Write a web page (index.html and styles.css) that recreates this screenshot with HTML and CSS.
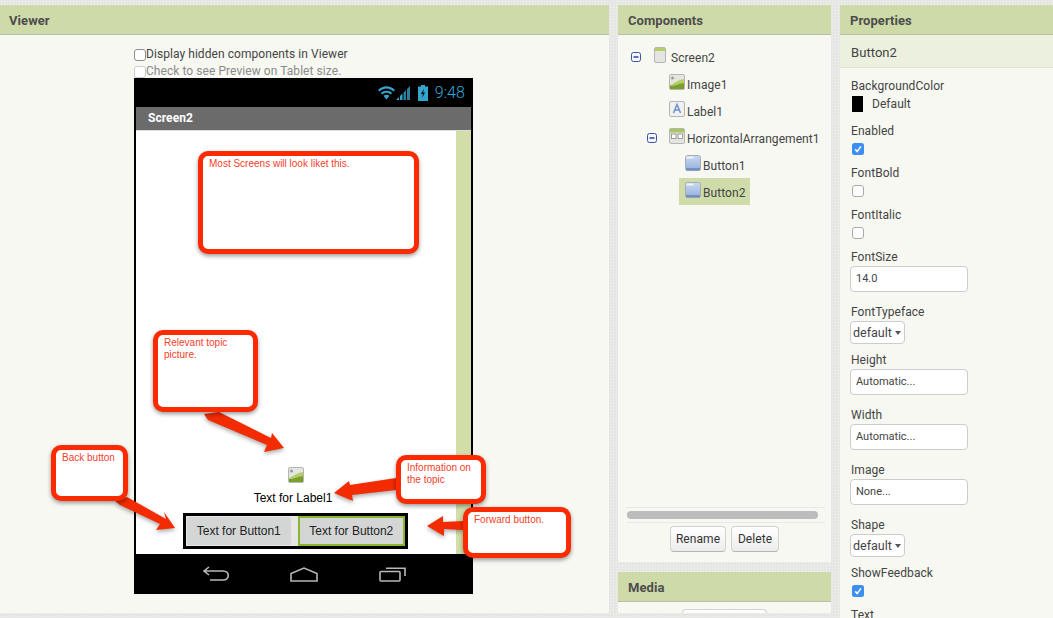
FILE: index.html
```html
<!DOCTYPE html>
<html lang="en">
<head>
    <meta charset="UTF-8">
    <title>Viewer</title>
    <link rel="stylesheet" href="styles.css">
</head>
<body>
<svg class="defs" width="0" height="0">
    <defs>
        <linearGradient id="btn-fill" x1="0" y1="0" x2="0" y2="1">
            <stop offset="0" stop-color="#c9daf0"/>
            <stop offset="1" stop-color="#93b0dc"/>
        </linearGradient>
    </defs>
    <symbol id="ic-image" viewBox="0 0 16 16">
        <rect x="0.5" y="0.5" width="15" height="15" rx="1.5" fill="#e4e6e2" stroke="#b5b5b5"/>
        <circle cx="3.5" cy="4" r="1.5" fill="#9a9a9a"/>
        <path d="M1 11 C5 10 8 6 15 5 V9 C10 9 7 12 1 12 Z" fill="#b4cf62"/>
        <path d="M1 12 C7 12 10 9 15 9 V15 H1 Z" fill="#7c9e2c"/>
    </symbol>
    <symbol id="ic-button" viewBox="0 0 16 16">
        <rect x="0.5" y="0.5" width="15" height="15" rx="2" fill="url(#btn-fill)" stroke="#a9adb3"/>
        <rect x="1.5" y="1.5" width="7" height="2" fill="#eef3fa"/>
        <rect x="1" y="13" width="14" height="2.5" fill="#7391c0"/>
    </symbol>
    <symbol id="ic-minus" viewBox="0 0 10 10">
        <rect x="0.5" y="0.5" width="9" height="9" rx="2" fill="#f4f5fa" stroke="#3f51a0"/>
        <rect x="2.5" y="4.2" width="5" height="1.6" fill="#3f51a0"/>
    </symbol>
    <symbol id="ic-check" viewBox="0 0 12 12">
        <rect width="12" height="12" rx="2.5" fill="#3b8ff3"/>
        <path d="M3.2 6.4 L5.2 8.6 L8.9 3.4" fill="none" stroke="#fff" stroke-width="1.6"/>
    </symbol>
</svg>

<div class="page">
    <section class="panel viewer">
        <h2 class="panel-head">Viewer</h2>
        <div class="viewer-body">
            <div class="opt"><span class="cb"></span>Display hidden components in Viewer</div>
            <div class="opt opt-off"><span class="cb"></span>Check to see Preview on Tablet size.</div>

            <div class="phone">
                <div class="status">
                    <svg class="st-wifi" width="17" height="14" viewBox="0 0 17 14">
                        <path d="M0 4 C5 -1 12 -1 17 4 L15.6 5.5 C11 1.5 6 1.5 1.4 5.5 Z M2.8 7 C6 4 11 4 14.2 7 L12.8 8.5 C10 6.2 7 6.2 4.2 8.5 Z M5.5 9.8 C7.5 8.3 9.5 8.3 11.5 9.8 L8.5 13.5 Z" fill="#33a5cf"/>
                    </svg>
                    <svg class="st-signal" width="15" height="15" viewBox="0 0 15 15">
                        <path d="M0 15 L3 12 V15 Z M4 11 L6.5 8.5 V15 H4 Z" fill="#33a5cf"/>
                        <path d="M7.5 7.5 L10 5 V15 H7.5 Z M11 4 L14 1 V15 H11 Z" fill="#2a7f9f"/>
                    </svg>
                    <svg class="st-batt" width="10" height="16" viewBox="0 0 10 16">
                        <path d="M3 0 H7 V1.5 H10 V16 H0 V1.5 H3 Z" fill="#33a5cf"/>
                        <path d="M6 3.5 L3 9 H5 L4 13 L7 7.5 H5 Z" fill="#000"/>
                    </svg>
                    <span class="st-time">9:48</span>
                </div>
                <div class="title-bar">Screen2</div>
                <div class="screen">
                    <div class="screen-main">
                        <svg class="img-ph"><use href="#ic-image"/></svg>
                        <div class="screen-label">Text for Label1</div>
                        <div class="btn-row">
                            <div class="phone-btn">Text for Button1</div>
                            <div class="phone-btn phone-btn-sel">Text for Button2</div>
                        </div>
                    </div>
                    <div class="screen-scroll"></div>
                </div>
                <div class="nav">
                    <svg width="26" height="16" viewBox="0 0 26 16">
                        <path d="M6 1 L1 5 L6 9 M1 5 H20 C27 5 27 14 20 14 H7" fill="none" stroke="#b8b8b8" stroke-width="1.6"/>
                    </svg>
                    <svg width="28" height="15" viewBox="0 0 28 15">
                        <path d="M1 14 V6.5 L14 1 L27 6.5 V14 Z" fill="none" stroke="#b8b8b8" stroke-width="1.6"/>
                    </svg>
                    <svg width="27" height="15" viewBox="0 0 27 15">
                        <rect x="1" y="4.5" width="20" height="9.5" rx="1" fill="none" stroke="#b8b8b8" stroke-width="1.6"/>
                        <path d="M7 1.2 H26 V9" fill="none" stroke="#b8b8b8" stroke-width="1.6"/>
                    </svg>
                </div>
            </div>
        </div>
    </section>

    <div class="middle">
        <section class="panel components">
            <h2 class="panel-head">Components</h2>
            <div class="tree">
                <div class="tree-row row-root">
                    <svg class="minus"><use href="#ic-minus"/></svg>
                    <svg class="ic-screen" width="12" height="16" viewBox="0 0 12 16">
                        <rect x="0.5" y="0.5" width="11" height="15" rx="1.5" fill="#e4e5e2" stroke="#b5b5b5"/>
                        <rect x="1" y="1" width="10" height="3" fill="#b4cf62"/>
                    </svg>
                    <span>Screen2</span>
                </div>
                <div class="tree-row lvl1"><svg class="ic"><use href="#ic-image"/></svg><span>Image1</span></div>
                <div class="tree-row lvl1">
                    <svg class="ic" viewBox="0 0 16 16">
                        <rect x="0.5" y="0.5" width="15" height="15" rx="1.5" fill="#f0f0f0" stroke="#b5b5b5"/>
                        <path d="M4.5 12 L8 3.5 L11.5 12 M5.8 9 H10.2" fill="none" stroke="#6f93cf" stroke-width="1.5"/>
                    </svg>
                    <span>Label1</span>
                </div>
                <div class="tree-row row-arr">
                    <svg class="minus"><use href="#ic-minus"/></svg>
                    <svg class="ic" viewBox="0 0 16 16">
                        <rect x="0.5" y="0.5" width="15" height="15" rx="1.5" fill="#e4e5e2" stroke="#b5b5b5"/>
                        <rect x="1" y="1" width="14" height="3.5" fill="#a9c75a"/>
                        <rect x="2.5" y="6" width="4.5" height="4.5" fill="#fff" stroke="#888" stroke-width="0.8"/>
                        <rect x="9" y="6" width="4.5" height="4.5" fill="#fff" stroke="#888" stroke-width="0.8"/>
                    </svg>
                    <span>HorizontalArrangement1</span>
                </div>
                <div class="tree-row lvl2"><svg class="ic"><use href="#ic-button"/></svg><span>Button1</span></div>
                <div class="tree-row lvl2 tree-sel"><svg class="ic"><use href="#ic-button"/></svg><span>Button2</span></div>
            </div>
            <div class="comp-foot">
                <div class="hscroll"><div class="hthumb"></div></div>
                <div class="comp-btns">
                    <div class="btn btn-rename">Rename</div>
                    <div class="btn btn-delete">Delete</div>
                </div>
            </div>
        </section>
        <section class="panel media">
            <h2 class="panel-head">Media</h2>
            <div class="media-body"><div class="btn btn-upload">Upload File ...</div></div>
        </section>
    </div>

    <section class="panel properties">
        <h2 class="panel-head">Properties</h2>
        <div class="prop-title">Button2</div>
        <div class="props">
            <div class="lbl">BackgroundColor</div>
            <div class="color-row"><span class="swatch"></span>Default</div>
            <div class="lbl">Enabled</div>
            <svg class="check"><use href="#ic-check"/></svg>
            <div class="lbl">FontBold</div>
            <span class="cb cb-prop"></span>
            <div class="lbl">FontItalic</div>
            <span class="cb cb-prop"></span>
            <div class="lbl">FontSize</div>
            <div class="field">14.0</div>
            <div class="lbl">FontTypeface</div>
            <div class="sel">default<i class="caret"></i></div>
            <div class="lbl">Height</div>
            <div class="field">Automatic...</div>
            <div class="lbl">Width</div>
            <div class="field">Automatic...</div>
            <div class="lbl">Image</div>
            <div class="field">None...</div>
            <div class="lbl">Shape</div>
            <div class="sel">default<i class="caret"></i></div>
            <div class="lbl">ShowFeedback</div>
            <svg class="check"><use href="#ic-check"/></svg>
            <div class="lbl">Text</div>
        </div>
    </section>

    <!-- callouts drawn over the viewer -->
    <svg class="arrows" width="1053" height="618" viewBox="0 0 1053 618">
        <path d="M204 414 L219 412 L271 438 L272 433 L284 448 L264 452 L267 445 L208 420 Z"/>
        <path d="M115 501 L127 497 L166 519 L164 512 L175 528 L156 530 L160 524 L120 505 Z"/>
        <path d="M396 478 L396 490 L352 495 L353 501 L334 493 L349 481 L350 485 Z"/>
        <path d="M463 521 L463 530 L444 529 L444 536 L427 526 L443 516 L443 522 Z"/>
    </svg>
    <div class="note note-most">Most Screens will look liket this.</div>
    <div class="note note-topic">Relevant topic picture.</div>
    <div class="note note-back">Back button</div>
    <div class="note note-info">Information on the topic</div>
    <div class="note note-fwd">Forward button.</div>
</div>
</body>
</html>
```

FILE: styles.css
```css
html, body {
    margin: 0;
    height: 618px;
    overflow: hidden;
}
body {
    font-family: Roboto, "Liberation Sans", sans-serif;
    font-size: 12px;
    letter-spacing: 0.06px;
    color: #444;
    background-color: #e6e6e4;
    background-image: radial-gradient(#f4f4f2 1px, transparent 1px);
    background-size: 3px 3px;
}
.defs {
    position: absolute;
}
.page {
    position: relative;
    display: flex;
    align-items: flex-start;
    gap: 9px;
    padding-top: 5px;
    width: 1053px;
    height: 613px;
}

/* panels */
.panel {
    background: #f7f8f2;
    box-sizing: border-box;
    overflow: hidden;
}
.panel-head {
    margin: 0;
    height: 30px;
    line-height: 31px;
    padding-left: 9px;
    font-size: 13px;
    font-weight: 700;
    color: #4d4d4d;
    background: #cedba9;
    border-bottom: 1px solid #b9bfa8;
    box-sizing: border-box;
}
.middle .panel-head,
.properties .panel-head {
    padding-left: 10px;
}
.viewer {
    width: 609px;
    height: 608px;
}
.middle {
    display: flex;
    flex-direction: column;
    gap: 10px;
    width: 213px;
}
.components {
    height: 557px;
    position: relative;
}
.media {
    height: 41px;
}
.properties {
    width: 213px;
    height: 613px;
}

/* viewer */
.viewer-body {
    padding: 11px 0 0 134px;
}
.opt {
    display: flex;
    align-items: center;
    height: 17px;
    font-size: 12px;
    line-height: 17px;
}
.opt-off {
    color: #8a8a8a;
}
.opt-off .cb {
    border-color: #ccc;
}
.cb {
    display: block;
    flex: none;
    box-sizing: border-box;
    width: 12px;
    height: 12px;
    background: #fff;
    border: 1px solid #8f8f8f;
    border-radius: 3px;
}
.phone {
    width: 339px;
    box-sizing: border-box;
    background: #000;
    border: solid #000;
    border-width: 0 2px;
    margin-top: -2px;
}
.status {
    display: flex;
    align-items: center;
    height: 29px;
    padding-right: 6px;
    justify-content: flex-end;
}
.st-wifi {
    margin-right: 1px;
}
.st-signal {
    margin-right: 7px;
}
.st-batt {
    margin-right: 7px;
}
.st-time {
    font-size: 16px;
    font-weight: 300;
    color: #33a9d6;
}
.title-bar {
    height: 24px;
    line-height: 23px;
    padding-left: 12px;
    font-size: 12px;
    font-weight: 700;
    color: #fff;
    background: #6b6b6b;
    border-bottom: 1px solid #ddd;
    box-sizing: border-box;
}
.screen {
    display: flex;
    height: 423px;
    background: #fff;
}
.screen-main {
    flex: 1;
    display: flex;
    flex-direction: column;
    align-items: center;
    justify-content: flex-end;
    padding-bottom: 5px;
    font-family: "Liberation Sans", sans-serif;
    letter-spacing: normal;
    color: #000;
}
.screen-scroll {
    width: 15px;
    background: #d3dda8;
}
.img-ph {
    width: 16px;
    height: 16px;
    margin-bottom: 8px;
}
.screen-label {
    height: 14px;
    line-height: 14px;
    margin: 0 6px 8px 0;
}
.btn-row {
    display: flex;
    align-items: center;
    gap: 7px;
    width: 225px;
    height: 36px;
    margin-right: 1px;
    box-sizing: border-box;
    padding-left: 1px;
    border: 3px solid #000;
    background: #e6e6e6;
    color: #222;
}
.phone-btn {
    display: flex;
    align-items: center;
    justify-content: center;
    width: 104px;
    height: 28px;
    background: #d4d6d6;
    border-radius: 2px;
}
.phone-btn-sel {
    width: 108px;
    height: 30px;
    box-sizing: border-box;
    border: 2px solid #8ab52e;
    border-radius: 0;
}
.nav {
    display: flex;
    align-items: center;
    gap: 61px;
    height: 40px;
    padding-left: 67px;
}

/* tree */
.tree {
    padding-top: 8px;
    font-size: 12px;
}
.tree-row {
    display: flex;
    align-items: center;
    height: 27px;
    box-sizing: border-box;
}
.tree-row span {
    padding: 3px 0 0 2px;
}
.ic {
    flex: none;
    width: 16px;
    height: 16px;
    margin-top: -3px;
}
.minus {
    flex: none;
    width: 10px;
    height: 10px;
}
.row-root {
    padding-left: 13px;
}
.row-root .ic-screen {
    margin: -3px 3px 0 13px;
}
.lvl1 {
    padding-left: 51px;
}
.row-arr {
    padding-left: 29px;
}
.row-arr .ic {
    margin-left: 12px;
}
.lvl2 {
    padding-left: 67px;
}
.tree-sel {
    margin-left: 61px;
    padding-left: 6px;
    width: 71px;
    background: #cfdcaa;
}
.comp-foot {
    position: absolute;
    left: 8px;
    right: 6px;
    top: 502px;
}
.hscroll {
    padding: 3px 1px;
    border: solid #e9e9e4;
    border-width: 1px 0;
}
.hthumb {
    width: 191px;
    height: 8px;
    background: #bcbcbc;
    border-radius: 4px;
}
.comp-btns {
    display: flex;
    justify-content: center;
    gap: 5px;
    margin: 3px 0 0 -2px;
}
.btn {
    height: 26px;
    line-height: 25px;
    box-sizing: border-box;
    text-align: center;
    font-size: 12px;
    color: #333;
    background: linear-gradient(#fff, #ececec);
    border: 1px solid #d2d2d2;
    border-bottom-color: #b5b5b5;
    border-radius: 4px;
}
.btn-rename {
    width: 56px;
}
.btn-delete {
    width: 48px;
}
.media-body {
    padding: 7px 0 0 64px;
}
.btn-upload {
    width: 85px;
}

/* properties */
.prop-title {
    height: 33px;
    line-height: 35px;
    padding-left: 11px;
    font-size: 13px;
    background: #ecf1df;
    border-bottom: 1px solid #dfe3d3;
    box-sizing: border-box;
}
.props {
    padding: 11px 0 0 11px;
}
.lbl {
    height: 14px;
    line-height: 14px;
}
.color-row {
    display: flex;
    align-items: center;
    height: 16px;
    margin: 3px 0 12px 1px;
}
.swatch {
    width: 11px;
    height: 16px;
    background: #000;
    margin-right: 9px;
}
.check {
    display: block;
    width: 12px;
    height: 12px;
    margin: 5px 0 11px 1px;
}
.cb-prop {
    margin: 5px 0 11px 1px;
    border-color: #aaa;
}
.field {
    width: 118px;
    height: 26px;
    line-height: 24px;
    margin: 2px 0 13px -1px;
    padding-left: 5px;
    box-sizing: border-box;
    font-size: 11px;
    letter-spacing: 0;
    background: #fff;
    border: 1px solid #ccc;
    border-radius: 4px;
}
.sel {
    display: flex;
    align-items: center;
    width: 55px;
    height: 23px;
    margin: 2px 0 9px -1px;
    padding-left: 2px;
    box-sizing: border-box;
    font-size: 12.5px;
    letter-spacing: 0;
    background: #fff;
    border: 1px solid #ccc;
    border-radius: 4px;
}
.caret {
    margin-left: 3px;
    border: solid transparent;
    border-width: 4px 3.5px 0;
    border-top-color: #555;
}

/* callouts */
.arrows {
    position: absolute;
    left: 0;
    top: 0;
    fill: #f22b00;
    filter: drop-shadow(0 2px 2px rgba(0, 0, 0, 0.35));
}
.note {
    position: absolute;
    box-sizing: border-box;
    padding: 2px 6px;
    font-family: "Liberation Sans", sans-serif;
    font-size: 10px;
    letter-spacing: normal;
    line-height: 12px;
    color: #f5402a;
    background: #fff;
    border: 5px solid #fb2a00;
    border-radius: 10px;
    box-shadow: 0 2px 4px rgba(0, 0, 0, 0.4);
}
.note-most {
    left: 198px;
    top: 151px;
    width: 221px;
    height: 103px;
}
.note-topic {
    left: 153px;
    top: 330px;
    width: 105px;
    height: 82px;
}
.note-back {
    left: 51px;
    top: 445px;
    width: 77px;
    height: 56px;
}
.note-info {
    left: 396px;
    top: 455px;
    width: 90px;
    height: 49px;
}
.note-fwd {
    left: 463px;
    top: 507px;
    width: 108px;
    height: 51px;
}
```
